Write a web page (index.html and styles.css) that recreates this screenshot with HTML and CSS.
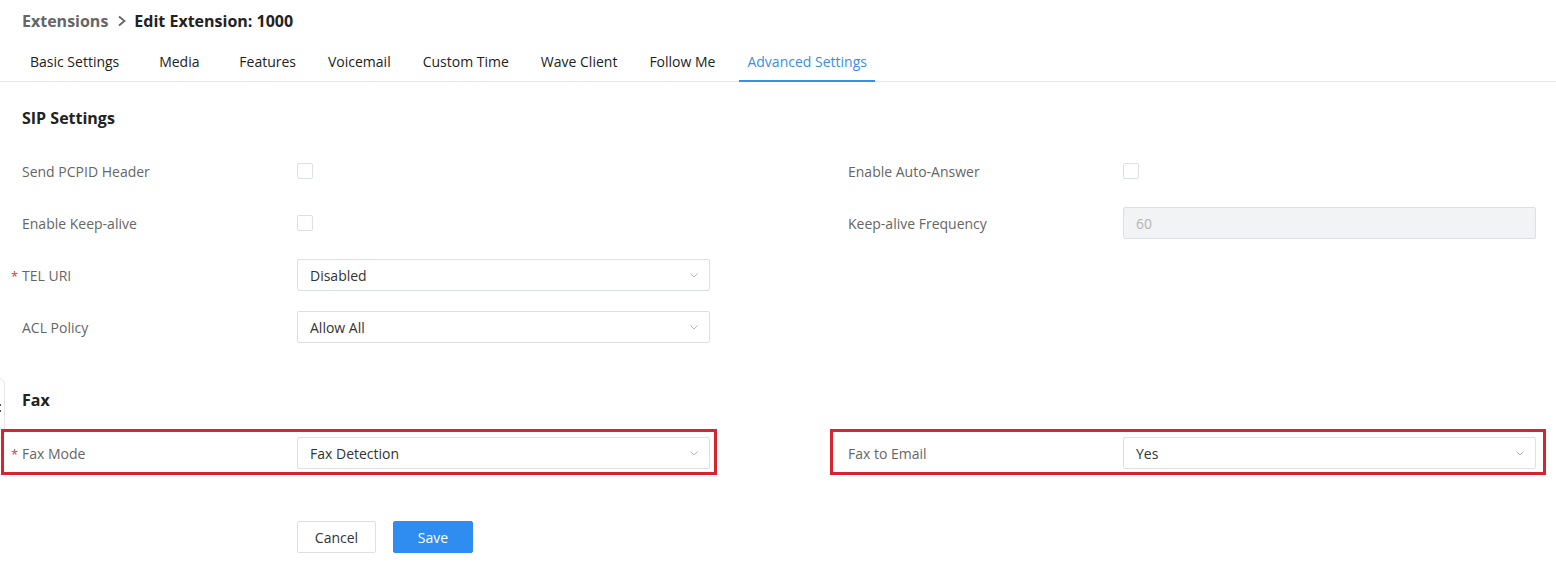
FILE: index.html
```html
<!DOCTYPE html>
<html>
<head>
<meta charset="utf-8">
<link rel="stylesheet" href="styles.css">
</head>
<body>
<div class="page">
  <div class="side-handle"><span class="handle-dots"></span></div>
  <div class="breadcrumb">
    <span class="crumb">Extensions</span>
    <svg class="crumb-sep" width="10" height="12" viewBox="0 0 10 12"><path d="M2 1.5 L7.5 6 L2 10.5" fill="none" stroke="#666" stroke-width="1.8"/></svg>
    <span class="crumb-current">Edit Extension: 1000</span>
  </div>
  <div class="tabs">
    <div class="tab">Basic Settings</div>
    <div class="tab">Media</div>
    <div class="tab">Features</div>
    <div class="tab">Voicemail</div>
    <div class="tab">Custom Time</div>
    <div class="tab">Wave Client</div>
    <div class="tab">Follow Me</div>
    <div class="tab active">Advanced Settings</div>
  </div>

  <h3 class="section-title first">SIP Settings</h3>
  <div class="form-grid">
    <div class="item">
      <label class="label">Send PCPID Header</label>
      <div class="control"><span class="checkbox"></span></div>
    </div>
    <div class="item">
      <label class="label">Enable Auto-Answer</label>
      <div class="control"><span class="checkbox"></span></div>
    </div>
    <div class="item">
      <label class="label">Enable Keep-alive</label>
      <div class="control"><span class="checkbox"></span></div>
    </div>
    <div class="item">
      <label class="label">Keep-alive Frequency</label>
      <div class="control"><div class="input disabled">60</div></div>
    </div>
    <div class="item col1">
      <label class="label required">TEL URI</label>
      <div class="control"><div class="select"><span>Disabled</span><svg class="arrow" width="8" height="5" viewBox="0 0 8 5"><path d="M0.5 0.5 L4 4 L7.5 0.5" fill="none" stroke="#b4b4b4" stroke-width="1"/></svg></div></div>
    </div>
    <div class="item col1">
      <label class="label">ACL Policy</label>
      <div class="control"><div class="select"><span>Allow All</span><svg class="arrow" width="8" height="5" viewBox="0 0 8 5"><path d="M0.5 0.5 L4 4 L7.5 0.5" fill="none" stroke="#b4b4b4" stroke-width="1"/></svg></div></div>
    </div>
  </div>

  <h3 class="section-title second">Fax</h3>
  <div class="form-grid">
    <div class="item mark-left">
      <label class="label required">Fax Mode</label>
      <div class="control"><div class="select"><span>Fax Detection</span><svg class="arrow" width="8" height="5" viewBox="0 0 8 5"><path d="M0.5 0.5 L4 4 L7.5 0.5" fill="none" stroke="#b4b4b4" stroke-width="1"/></svg></div></div>
    </div>
    <div class="item mark-right">
      <label class="label">Fax to Email</label>
      <div class="control"><div class="select"><span>Yes</span><svg class="arrow" width="8" height="5" viewBox="0 0 8 5"><path d="M0.5 0.5 L4 4 L7.5 0.5" fill="none" stroke="#b4b4b4" stroke-width="1"/></svg></div></div>
    </div>
  </div>

  <div class="actions">
    <button class="btn">Cancel</button>
    <button class="btn primary">Save</button>
  </div>
</div>
</body>
</html>
```

FILE: styles.css
```css
*, *::before, *::after { box-sizing: border-box; }
html, body { margin: 0; padding: 0; background: #fff; }
body {
  font-family: "Open Sans", "Noto Sans", "Liberation Sans", sans-serif;
  font-size: 14px;
  color: #333;
  overflow: hidden;
}
.page { position: relative; width: 1556px; height: 563px; }

.side-handle {
  position: absolute;
  left: -10px;
  top: 378px;
  width: 15px;
  height: 60px;
  border: 1px solid #e6e6e6;
  border-radius: 6px;
  background: #fff;
}
.handle-dots {
  position: absolute;
  right: 3px;
  top: 25px;
  width: 2px;
  height: 8px;
  border-top: 2px solid #555;
  border-bottom: 2px solid #555;
}

.breadcrumb {
  height: 42px;
  padding-left: 22px;
  display: flex;
  align-items: center;
  font-size: 16px;
  font-weight: 700;
}
.crumb { color: #666; }
.crumb-sep { margin: 0 7px 0 9px; }
.crumb-current { color: #222; }

.tabs {
  display: flex;
  padding-left: 22px;
  border-bottom: 1px solid #e8e8e8;
}
.tab {
  height: 40px;
  min-width: 72px;
  padding: 1px 8px 0;
  margin-right: 16px;
  margin-bottom: -1px;
  line-height: 37px;
  text-align: center;
  color: #222;
  border-bottom: 2px solid transparent;
}
.tab.active {
  color: #3a8ee6;
  border-bottom-color: #3a8ee6;
}

.section-title {
  margin: 0;
  padding-left: 22px;
  font-size: 16px;
  font-weight: 700;
  line-height: 24px;
  color: #222;
}
.section-title.first { margin-top: 24px; margin-bottom: 25px; }
.section-title.second { margin-top: 45px; margin-bottom: 25px; }

.form-grid {
  display: grid;
  grid-template-columns: 688px 688px;
  justify-content: space-between;
  row-gap: 20px;
  padding: 0 20px 0 22px;
}
.item {
  position: relative;
  display: flex;
  align-items: center;
  height: 32px;
}
.item.col1 { grid-column: 1; }
.label {
  width: 275px;
  flex: none;
  color: #666;
  position: relative;
}
.label.required::before {
  content: "*";
  position: absolute;
  left: -11px;
  top: 1px;
  color: #e0322d;
  font-size: 13px;
}
.control { width: 413px; flex: none; display: flex; align-items: center; }

.checkbox {
  width: 16px;
  height: 16px;
  border: 1px solid #dcdfe6;
  border-radius: 2px;
  background: #fff;
}
.input, .select {
  width: 413px;
  height: 32px;
  border: 1px solid #dcdfe6;
  border-radius: 2px;
  padding: 0 11px 0 12px;
  display: flex;
  align-items: center;
  justify-content: space-between;
  color: #333;
}
.input.disabled {
  background: #f2f3f5;
  color: #b5b5b5;
}

.mark-left::after, .mark-right::after {
  content: "";
  position: absolute;
  top: -8px;
  height: 46px;
  border: 3px solid #d7242f;
  pointer-events: none;
}
.mark-left::after { left: -21px; width: 716px; }
.mark-right::after { left: -18px; width: 716px; }

.actions {
  margin-top: 52px;
  padding-left: 297px;
  display: flex;
  gap: 17px;
}
.btn {
  height: 32px;
  width: 79px;
  border: 1px solid #dcdfe6;
  border-radius: 2px;
  background: #fff;
  color: #333;
  font-family: inherit;
  font-size: 14px;
  padding: 0;
}
.btn.primary {
  width: 80px;
  background: #2f8cf0;
  border-color: #2f8cf0;
  color: #fff;
}
```
